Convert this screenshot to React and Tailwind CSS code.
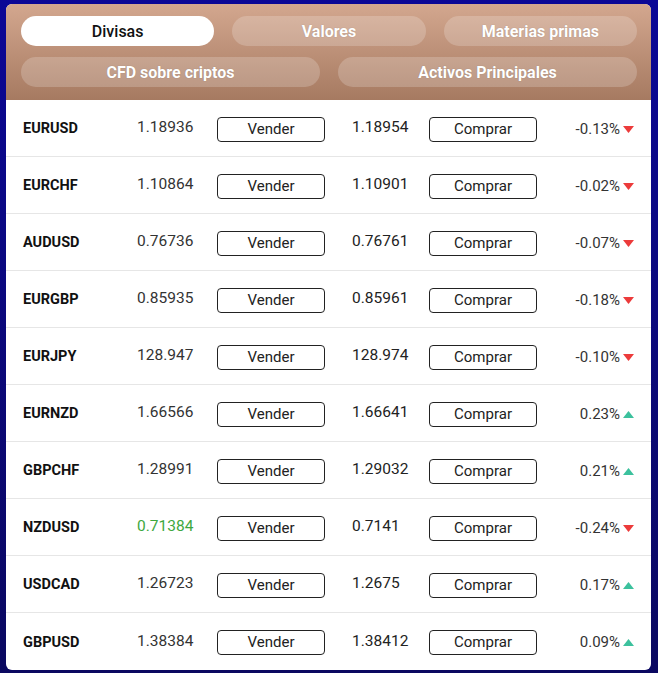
import React from 'react'

const rows = [
  { sym: 'EURUSD', bid: '1.18936', ask: '1.18954', chg: '-0.13%', up: false },
  { sym: 'EURCHF', bid: '1.10864', ask: '1.10901', chg: '-0.02%', up: false },
  { sym: 'AUDUSD', bid: '0.76736', ask: '0.76761', chg: '-0.07%', up: false },
  { sym: 'EURGBP', bid: '0.85935', ask: '0.85961', chg: '-0.18%', up: false },
  { sym: 'EURJPY', bid: '128.947', ask: '128.974', chg: '-0.10%', up: false },
  { sym: 'EURNZD', bid: '1.66566', ask: '1.66641', chg: '0.23%', up: true },
  { sym: 'GBPCHF', bid: '1.28991', ask: '1.29032', chg: '0.21%', up: true },
  { sym: 'NZDUSD', bid: '0.71384', ask: '0.7141', chg: '-0.24%', up: false, bidGreen: true },
  { sym: 'USDCAD', bid: '1.26723', ask: '1.2675', chg: '0.17%', up: true },
  { sym: 'GBPUSD', bid: '1.38384', ask: '1.38412', chg: '0.09%', up: true },
]

function Tab({ label, active }) {
  return (
    <button
      className={
        'h-[30px] pt-[1px] rounded-full text-[16px] ' +
        (active
          ? 'bg-white text-[#111] font-medium'
          : 'bg-white/20 text-white font-bold [text-shadow:0_0_1px_rgba(0,0,0,0.25)]')
      }
    >
      {label}
    </button>
  )
}

function Arrow({ up }) {
  return up ? (
    <svg width="11" height="7" viewBox="0 0 11 7" className="ml-[3px]">
      <polygon points="0,7 11,7 5.5,0" fill="#3cc19d" />
    </svg>
  ) : (
    <svg width="11" height="7" viewBox="0 0 11 7" className="ml-[3px]">
      <polygon points="0,0 11,0 5.5,7" fill="#ec3b3b" />
    </svg>
  )
}

export default function App() {
  return (
    <div
      className="min-h-screen pt-[4px] pl-[6px] pr-[7px] pb-[6px] bg-gradient-to-b from-[#0b0796] to-[#0a0860]"
      style={{ fontFamily: 'Roboto, "Liberation Sans", sans-serif' }}
    >
      <div className="w-[645px] rounded-[6px] overflow-hidden bg-white">
        {/* tabs header */}
        <div className="bg-gradient-to-b from-[#d3a78f] to-[#a67a61] px-[15px] pt-[12px] pb-[13px] pr-[14px]">
          <div className="grid grid-cols-3 gap-[18px]">
            <Tab label="Divisas" active />
            <Tab label="Valores" />
            <Tab label="Materias primas" />
          </div>
          <div className="grid grid-cols-2 gap-[18px] mt-[11px]">
            <Tab label="CFD sobre criptos" />
            <Tab label="Activos Principales" />
          </div>
        </div>

        {/* quotes */}
        <div>
          {rows.map((r, i) => (
            <div
              key={r.sym}
              className={
                'flex items-center h-[57px] pt-[2px] pl-[17px] ' +
                (i < rows.length - 1 ? 'border-b border-[#e6e6e6]' : '')
              }
            >
              <div className="w-[114px] text-[14.5px] font-bold text-[#111]">{r.sym}</div>
              <div className={'w-[80px] -mt-[2px] text-[15.5px] ' + (r.bidGreen ? 'text-[#3ea83e]' : 'text-[#333]')}>{r.bid}</div>
              <button className="w-[108px] h-[25px] border border-[#222] rounded-[4px] text-[15px] text-[#222]">
                Vender
              </button>
              <div className="w-[27px]" />
              <div className="w-[77px] -mt-[2px] text-[15.5px] text-[#222]">{r.ask}</div>
              <button className="w-[108px] h-[25px] border border-[#222] rounded-[4px] text-[15px] text-[#222]">
                Comprar
              </button>
              <div className="w-[83px] flex justify-end text-[15px] text-[#333]">{r.chg}</div>
              <Arrow up={r.up} />
            </div>
          ))}
        </div>
      </div>
    </div>
  )
}
